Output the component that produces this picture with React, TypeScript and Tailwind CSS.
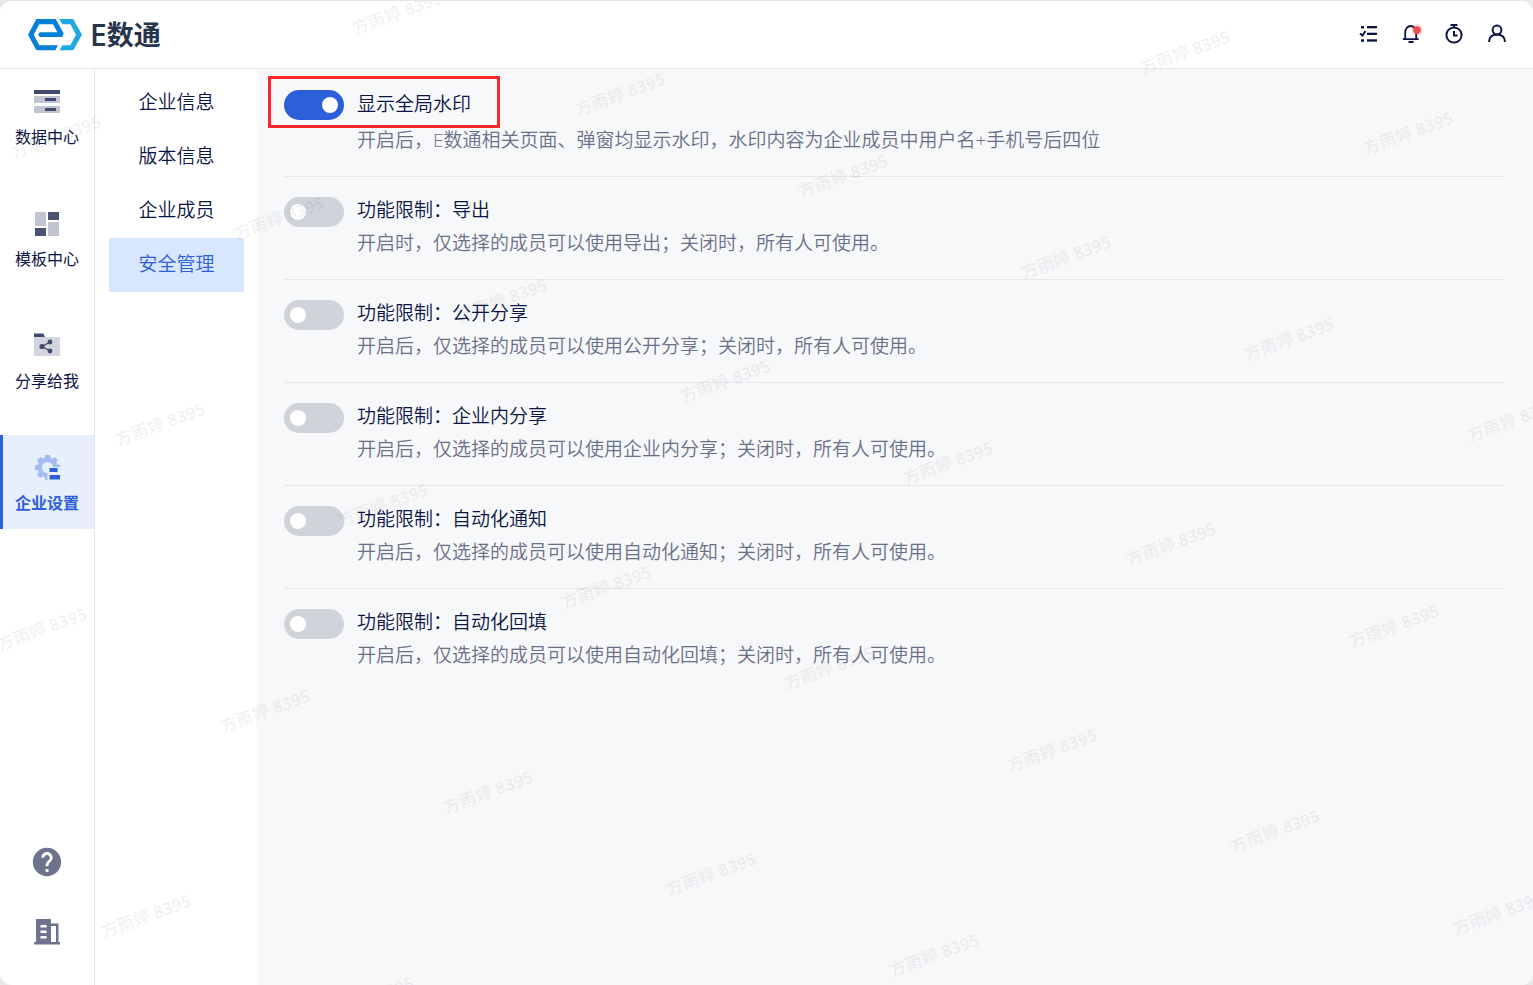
import { useEffect, useState } from "react";
import { MdHelp } from "react-icons/md";
import clsx from "clsx";

const navItems = [
    { id: "data", label: "数据中心", icon: <DataIcon /> },
    { id: "template", label: "模板中心", icon: <TemplateIcon /> },
    { id: "shared", label: "分享给我", icon: <ShareFolderIcon /> },
    { id: "settings", label: "企业设置", icon: <SettingsIcon /> },
];

const subItems = ["企业信息", "版本信息", "企业成员", "安全管理"];

const initialSettings = [
    { id: "watermark", title: "显示全局水印", desc: "开启后，E数通相关页面、弹窗均显示水印，水印内容为企业成员中用户名+手机号后四位", on: true },
    { id: "export", title: "功能限制：导出", desc: "开启时，仅选择的成员可以使用导出；关闭时，所有人可使用。", on: false },
    { id: "public-share", title: "功能限制：公开分享", desc: "开启后，仅选择的成员可以使用公开分享；关闭时，所有人可使用。", on: false },
    { id: "inner-share", title: "功能限制：企业内分享", desc: "开启后，仅选择的成员可以使用企业内分享；关闭时，所有人可使用。", on: false },
    { id: "auto-notify", title: "功能限制：自动化通知", desc: "开启后，仅选择的成员可以使用自动化通知；关闭时，所有人可使用。", on: false },
    { id: "auto-fill", title: "功能限制：自动化回填", desc: "开启后，仅选择的成员可以使用自动化回填；关闭时，所有人可使用。", on: false },
];

function DataIcon() {
    return (
        <svg width="26" height="26" viewBox="0 0 26 26">
            <rect y="1" width="26" height="4" rx="0.5" fill="#414a6c" />
            <rect y="7" width="26" height="7" rx="0.5" fill="#c2c4d2" />
            <rect y="17" width="26" height="7" rx="0.5" fill="#c2c4d2" />
            <rect x="11" y="9" width="11" height="3" fill="#414a6c" />
            <rect x="11" y="19" width="11" height="3" fill="#414a6c" />
        </svg>
    );
}

function TemplateIcon() {
    return (
        <svg width="26" height="26" viewBox="0 0 26 26">
            <rect x="1" y="1" width="11" height="14" fill="#c2c4d2" />
            <rect x="14" y="1" width="11" height="8" fill="#4b5272" />
            <rect x="1" y="17" width="11" height="8" fill="#4b5272" />
            <rect x="14" y="11" width="11" height="14" fill="#c2c4d2" />
        </svg>
    );
}

function ShareFolderIcon() {
    return (
        <svg width="26" height="26" viewBox="0 0 26 26">
            <path d="M0 0.5H9.5L11 4H0Z" fill="#414a6c" />
            <rect y="4" width="26" height="19" rx="0.5" fill="#d2d5df" />
            <path d="M16 9 8 13.5 16 18" fill="none" stroke="#414a6c" strokeWidth="1.3" />
            <circle cx="16" cy="9" r="2.4" fill="#414a6c" />
            <circle cx="8" cy="13.5" r="2.6" fill="#414a6c" />
            <circle cx="16" cy="18" r="2.4" fill="#414a6c" />
        </svg>
    );
}

function SettingsIcon() {
    return (
        <svg width="26" height="26" viewBox="0 0 26 26">
            <circle cx="13.5" cy="12.5" r="7.8" fill="none" stroke="#a5bcf0" strokeWidth="4.4" />
            <g fill="#a5bcf0">
                {[0, 45, 90, 135, 180, 225, 270, 315].map((deg) => (
                    <path key={deg} d="M10.500 3.500 11.100 0H15.900L16.500 3.500Z" transform={`rotate(${deg} 13.5 12.5)`} />
                ))}
            </g>
            <path d="M13.500 12H26V26H13.500Z" fill="#e8eefb" />
            <rect x="15.500" y="13" width="8" height="4" fill="#2b60da" />
            <rect x="15.500" y="20" width="10.500" height="4.500" rx="0.5" fill="#2b60da" />
        </svg>
    );
}

function BuildingIcon() {
    return (
        <svg width="26" height="26" viewBox="0 0 26 26">
            <path
                fillRule="evenodd"
                fill="#6d738c"
                d="M2 0H17V4.500H24.500V23H26V25.500H0V23H2ZM6.500 6V8.500H12.500V6ZM6.500 11.500V14H12.500V11.500ZM6.500 17V19.500H12.500V17ZM17 7V23H22V7Z"
            />
        </svg>
    );
}

function Logo() {
    return (
        <svg width="54" height="33" viewBox="84 53 162 99">
            <path
                fill="#0480d8"
                d="M84 103 109 56H167L191 99 187 110H121Q115 109 115 103 115 97 121 96H172L159 72H118L101 103 118 135H174L166 150H109Z"
            />
            <path fill="#20aae4" d="M178 56H220L246 103 220 150H178L187 135H211L228 103 211 72H187Z" />
        </svg>
    );
}

function HeaderActions() {
    const button = "cursor-pointer";
    return (
        <div className="flex items-center gap-[23px] text-[#0b1444]">
            <button className={button} aria-label="任务">
                <svg width="20" height="20" viewBox="0 0 20 20" fill="currentColor">
                    <rect x="9" y="2" width="10" height="2.300" />
                    <rect x="9" y="8.700" width="10" height="2.300" />
                    <rect x="9" y="15.300" width="10" height="2.300" />
                    <rect x="3" y="2" width="3" height="2.500" />
                    <rect x="3" y="15.300" width="3" height="2.500" />
                    <path d="M2 9.500 4.500 11.500 7.500 7" fill="none" stroke="currentColor" strokeWidth="1.900" />
                </svg>
            </button>
            <button className={button} aria-label="通知">
                <svg width="20" height="20" viewBox="0 0 20 20" fill="none" stroke="currentColor" strokeWidth="1.800" overflow="visible">
                    <path d="M1.800 15.200H17.700M4.200 15V8.500A5.500 6.500 0 0 1 15.200 8.500V15" />
                    <path d="M7.500 18H12.500" />
                    <circle cx="16" cy="6" r="6" fill="#f04f4f" fillOpacity="0.2" stroke="none" />
                    <circle cx="16" cy="6" r="3.800" fill="#ea4d4d" stroke="none" />
                </svg>
            </button>
            <button className={button} aria-label="计时">
                <svg width="20" height="20" viewBox="0 0 20 20" fill="none" stroke="currentColor" strokeWidth="2">
                    <circle cx="10" cy="11" r="7.600" />
                    <path d="M6.500 1H13.500M10 1V4M10 7V11.500H13.500" />
                </svg>
            </button>
            <button className={button} aria-label="个人中心">
                <svg width="20" height="20" viewBox="0 0 20 20" fill="none" stroke="currentColor" strokeWidth="2">
                    <circle cx="10" cy="6" r="4.400" />
                    <path d="M2 18C2 13 5.500 10.400 10 10.400S18 13 18 18" />
                </svg>
            </button>
        </div>
    );
}

// Repeats the user mark on a slanted grid across the whole page
function Watermark({ text }: { text: string }) {
    const [size, setSize] = useState({ w: window.innerWidth, h: window.innerHeight });

    useEffect(() => {
        const onResize = () => setSize({ w: window.innerWidth, h: window.innerHeight });
        window.addEventListener("resize", onResize);
        return () => window.removeEventListener("resize", onResize);
    }, []);

    const marks: { x: number; y: number }[] = [];
    for (let i = -12; i <= 14; i++) {
        for (let j = -10; j <= 12; j++) {
            const x = Math.round(620 + 223 * i - 118.5 * j);
            const y = Math.round(93 + 81.5 * i + 205.5 * j);
            if (x > -40 && x < size.w + 40 && y > -15 && y < size.h + 15) marks.push({ x, y });
        }
    }

    return (
        <div className="pointer-events-none absolute inset-0 overflow-hidden" aria-hidden="true">
            {marks.map((m) => (
                <span
                    key={`${m.x}-${m.y}`}
                    className="absolute -translate-x-1/2 -translate-y-1/2 -rotate-20 text-[17px] font-bold whitespace-nowrap text-[#1f2937]/6"
                    style={{ left: m.x, top: m.y }}
                >
                    {text}
                </span>
            ))}
        </div>
    );
}

export default function App() {
    const [activeNav, setActiveNav] = useState("settings");
    const [activeSub, setActiveSub] = useState("安全管理");
    const [settings, setSettings] = useState(initialSettings);

    const toggle = (id: string) => {
        setSettings(settings.map((s) => (s.id === id ? { ...s, on: !s.on } : s)));
    };

    return (
        <div className="min-h-screen bg-[#e9e9ea] font-[family-name:'Open_Sans','Noto_Sans_CJK_SC',sans-serif] text-[#0b1444]">
            <div className="relative flex min-h-screen flex-col overflow-hidden rounded-xl border-t border-[#e4e5e8] bg-white">
                <header className="flex h-17 items-center justify-between border-b border-[#e6e7eb] pr-[26px] pb-0.5 pl-7">
                    <a href="#" className="flex items-center gap-2 pt-0.5 text-[#26344d]">
                        <Logo />
                        <span className="flex items-center text-[27px] leading-8 font-bold">
                            <span className="text-3xl font-semibold">E</span>数通
                        </span>
                    </a>
                    <HeaderActions />
                </header>

                <div className="flex flex-1">
                    <aside className="flex w-[95px] shrink-0 flex-col border-r border-[#e6e7eb]">
                        <nav className="flex flex-col gap-7">
                            {navItems.map((item) => (
                                <button
                                    key={item.id}
                                    onClick={() => setActiveNav(item.id)}
                                    className={clsx(
                                        "flex h-[94px] cursor-pointer flex-col items-center gap-2.5 border-l-3 pt-5 pr-[3px] text-base leading-6",
                                        activeNav === item.id ? "border-[#2b60da] bg-[#e8eefb] font-bold text-[#2b60da]" : "border-transparent"
                                    )}
                                >
                                    {item.icon}
                                    <span className="whitespace-nowrap">{item.label}</span>
                                </button>
                            ))}
                        </nav>
                        <div className="mt-auto flex flex-col items-center gap-10 pb-10 text-[#6d738c]">
                            <button className="cursor-pointer" aria-label="帮助">
                                <MdHelp size={34} />
                            </button>
                            <button className="cursor-pointer" aria-label="企业">
                                <BuildingIcon />
                            </button>
                        </div>
                    </aside>

                    <nav className="flex w-[162px] shrink-0 flex-col pt-[7px] pr-[13px] pl-3.5">
                        {subItems.map((item) => (
                            <button
                                key={item}
                                onClick={() => setActiveSub(item)}
                                className={clsx(
                                    "h-[54px] cursor-pointer pb-0.5 text-[19px] leading-7 font-[350]",
                                    activeSub === item ? "bg-[#d9e6ff] text-[#2b60da]" : "text-[#0b1444]"
                                )}
                            >
                                {item}
                            </button>
                        ))}
                    </nav>

                    <main className="min-w-0 flex-1 bg-[#f7f8fa] pr-7 pl-[27px]">
                        {settings.map((s, i) => (
                            <section
                                key={s.id}
                                className={clsx(
                                    "relative flex gap-[13px] border-b border-[#e5e6ea] pb-[19px] last:border-b-0",
                                    i === 0 ? "pt-[19px]" : "pt-[17px]"
                                )}
                            >
                                {i === 0 && (
                                    <div className="pointer-events-none absolute top-[7px] -left-4 h-[52px] w-[232px] border-3 border-[#fb2629]" />
                                )}
                                <input
                                    type="checkbox"
                                    role="switch"
                                    id={s.id}
                                    checked={s.on}
                                    onChange={() => toggle(s.id)}
                                    className={clsx(
                                        "flex h-[30px] w-[60px] shrink-0 cursor-pointer appearance-none items-center rounded-full bg-[#d0d3da] px-1.5 before:size-4 before:rounded-full before:bg-white checked:justify-end checked:bg-[#2b60da]",
                                        i === 0 ? "mt-0.5" : "mt-[3px]"
                                    )}
                                />
                                <div className={clsx("flex flex-col text-[19px] leading-[33px] font-[350]", i === 0 && "gap-[3px]")}>
                                    <label htmlFor={s.id} className="cursor-pointer self-start">
                                        {s.title}
                                    </label>
                                    <p className="text-[#6b7089]">{s.desc}</p>
                                </div>
                            </section>
                        ))}
                    </main>
                </div>

                <Watermark text="方雨婷 8395" />
            </div>
        </div>
    );
}
